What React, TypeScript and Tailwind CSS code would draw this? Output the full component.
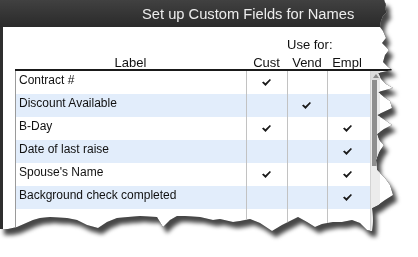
const rows = [
  { label: 'Contract #', checks: [true, false, false] },
  { label: 'Discount Available', checks: [false, true, false] },
  { label: 'B-Day', checks: [true, false, true] },
  { label: 'Date of last raise', checks: [false, false, true] },
  { label: "Spouse's Name", checks: [true, false, true] },
  { label: 'Background check completed', checks: [false, false, true] },
];

function Check() {
  return (
    <svg width="9" height="7" viewBox="0 0 9 7" className="block">
      <path d="M0 3.5 L1.5 2.4 L3.4 4.2 L7.8 0 L9 1.1 L3.5 7 Z" fill="#1a1a1a" />
    </svg>
  );
}

export default function App() {
  return (
    <div className="h-[257px] w-[418px] overflow-hidden bg-white font-['Liberation_Sans',Arial,sans-serif]">
      <div className="w-[400px] [filter:drop-shadow(0_0_0.7px_#111)_drop-shadow(4px_6px_2px_rgba(0,0,0,0.72))]">
        <div className="flex h-[240px] w-[400px] flex-col bg-white [clip-path:polygon(0_0,384px_0,386px_5px,385px_9px,387px_12px,383px_16px,381px_21px,380px_27px,383px_31px,386px_38px,382px_43px,389px_50px,385px_55px,383px_62px,387px_66px,392px_70px,378px_73px,381px_79px,386px_84px,393px_88px,378px_92px,384px_97px,390px_101px,392px_108px,377px_115px,385px_120px,392px_125px,384px_129px,377px_134px,379px_140px,384px_145px,379px_152px,376px_160px,377px_170px,385px_178px,390px_185px,393px_195px,385px_200px,378px_205px,372px_208px,373px_220px,372px_231px,367px_230px,360px_223px,352px_220px,342px_222px,333px_222px,322px_224px,315px_227px,307px_222px,298px_217px,290px_221px,282px_225px,272px_231px,260px_223px,250px_219px,240px_221px,233px_222px,220px_219px,213px_220px,200px_217px,185px_216px,177px_216px,170px_220px,163px_227px,157px_217px,140px_216px,128px_217px,117px_218px,107px_222px,98px_228px,87px_225px,77px_220px,67px_218px,50px_217px,40px_218px,33px_220px,17px_227px,8px_229px,0_229px)]">
          <div className="h-[27px] shrink-0 bg-gradient-to-b from-[#414141] to-[#2a2a2a] pl-[142px] pt-[7px] text-[14.7px] leading-none whitespace-nowrap text-[#ececec]">
            Set up Custom Fields for Names
          </div>
          <div className="flex flex-1 border-l-[3px] border-[#2e2e2e]">
            <div className="flex flex-1 flex-col pl-[12px] text-[#111]">
              <div className="pt-[10px] text-[13px] leading-[15px]">
                <div className="grid h-[15px] grid-cols-[231px_41px_40px_40px]">
                  <span className="col-start-3 text-center whitespace-nowrap">Use for:</span>
                </div>
                <div className="mt-[3px] grid h-[14px] grid-cols-[231px_41px_40px_40px] text-center">
                  <span>Label</span>
                  <span>Cust</span>
                  <span>Vend</span>
                  <span>Empl</span>
                </div>
              </div>
              <div className="flex flex-1 border-t-2 border-[#1a1a1a]">
                <div className="flex w-[355px] flex-col border-l border-[#9a9a9a] text-[12px]">
                  {rows.map((row, i) => (
                    <div
                      key={row.label}
                      className={`grid h-[23px] grid-cols-[230px_41px_40px_43px] ${i % 2 === 1 ? 'bg-[#e2edfb]' : 'bg-white'}`}
                    >
                      <div className="pl-[3px] pt-[3px] leading-[13px] whitespace-nowrap">{row.label}</div>
                      <div className="flex items-center justify-center border-l border-[#c2c2c2] pr-[2px]">
                        {row.checks[0] && <Check />}
                      </div>
                      <div className="flex items-center justify-center border-l border-[#c2c2c2] pr-[2px]">
                        {row.checks[1] && <Check />}
                      </div>
                      <div className="flex items-center justify-center border-l border-[#c2c2c2] pr-[4px]">
                        {row.checks[2] && <Check />}
                      </div>
                    </div>
                  ))}
                  <div className="grid flex-1 grid-cols-[230px_41px_40px_43px]">
                    <div />
                    <div className="border-l border-[#c2c2c2]" />
                    <div className="border-l border-[#c2c2c2]" />
                    <div className="border-l border-[#c2c2c2]" />
                  </div>
                </div>
                <div className="flex w-[10px] flex-col border-l border-[#d4d4d4] bg-[#ececec]">
                  <div className="flex h-[9px] items-center justify-center bg-[#dcdcdc]">
                    <svg width="6" height="4" viewBox="0 0 6 4">
                      <path d="M3 0 L6 4 L0 4 Z" fill="#8a8a8a" />
                    </svg>
                  </div>
                  <div className="ml-[1px] h-[86px] w-[5px] bg-[#8e8e8e]" />
                </div>
              </div>
            </div>
          </div>
        </div>
      </div>
    </div>
  );
}
